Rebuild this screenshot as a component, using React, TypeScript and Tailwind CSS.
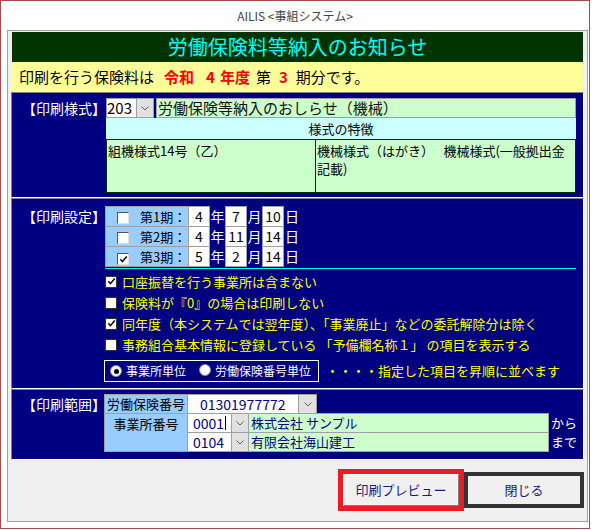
import React from 'react';

const periods = [
  { n: 1, checked: false, y: '4', m: '7', d: '10' },
  { n: 2, checked: false, y: '4', m: '11', d: '14' },
  { n: 3, checked: true, y: '5', m: '2', d: '14' },
];

const options = [
  { checked: true, text: '口座振替を行う事業所は含まない' },
  { checked: false, text: '保険料が『0』の場合は印刷しない' },
  { checked: true, text: '同年度（本システムでは翌年度）、「事業廃止」などの委託解除分は除く' },
  { checked: false, text: '事務組合基本情報に登録している 「予備欄名称１」 の項目を表示する' },
];

const Tick: React.FC = () => (
  <svg viewBox="0 0 10 10" className="w-[9px] h-[9px]">
    <path d="M1.5 4.8 L3.8 7.4 L8.6 1.8" stroke="#000" strokeWidth="1.7" fill="none" />
  </svg>
);

// checkbox used next to the yellow option texts
const Check: React.FC<{ checked?: boolean }> = ({ checked }) => (
  <span className="shrink-0 inline-flex items-center justify-center w-[12px] h-[12px] bg-white border border-[#333]">
    {checked && <Tick />}
  </span>
);

// sunken checkbox in the period table
const SunkenCheck: React.FC<{ checked?: boolean }> = ({ checked }) => (
  <span className="shrink-0 inline-flex items-center justify-center w-[12px] h-[12px] bg-white border-t border-l border-[#555] border-r-[#e0e0e0] border-b-[#e0e0e0] border-r border-b">
    {checked && <Tick />}
  </span>
);

const DropBtn: React.FC<{ className?: string }> = ({ className = '' }) => (
  <div className={`shrink-0 flex items-center justify-center bg-[#e1e1e1] border border-[#a0a0a0] ${className}`}>
    <svg viewBox="0 0 8 5" className="w-[8px] h-[5px]">
      <path d="M0.5 0.5 L4 4 L7.5 0.5" stroke="#606060" strokeWidth="1" fill="none" />
    </svg>
  </div>
);

const Radio: React.FC<{ checked?: boolean }> = ({ checked }) => (
  <span className="shrink-0 inline-flex items-center justify-center w-[12px] h-[12px] rounded-full bg-white border border-[#888]">
    {checked && <span className="w-[5px] h-[5px] rounded-full bg-black" />}
  </span>
);

const Section: React.FC<{ label: string; className?: string; children: React.ReactNode }> = ({ label, className = '', children }) => (
  <div className={`flex bg-[#000080] border border-[#808080] border-r-white border-b-white ${className}`}>
    <div className="w-[93px] shrink-0 pl-[10px] text-white text-[14px] leading-[20px] whitespace-nowrap">{label}</div>
    <div className="flex-1 min-w-0 pr-[7px]">{children}</div>
  </div>
);

export default function App() {
  return (
    <div className="w-[596px] h-[530px] bg-white font-['Noto_Sans_CJK_JP','Noto_Sans',sans-serif]">
      <div className="w-[590px] h-[529px] border border-[#a94a4a] flex flex-col">
        <div className="h-[29px] flex items-center justify-center text-[12px] text-[#444]">AILIS &lt;事組システム&gt;</div>

        <div className="ml-[6px] w-[581px] h-[492px] border border-[#a0a0a0] bg-[#f0f0f0] px-[3px] pt-px flex flex-col">
          <div className="mx-px h-[30px] bg-[#003300] text-[#00ffff] text-[20px] leading-[30px] text-center">
            労働保険料等納入のお知らせ
          </div>
          <div className="mx-px h-[30px] bg-[#ffff99] flex items-center pl-[7px] text-[15px] text-black whitespace-nowrap">
            <span>印刷を行う保険料は</span>
            <span className="ml-[10px] text-[#ff0000] font-bold">令和</span>
            <span className="ml-[12px] text-[#ff0000] font-bold">4</span>
            <span className="ml-[5px] text-[#ff0000] font-bold">年度</span>
            <span className="ml-[6px]">第</span>
            <span className="ml-[8px] text-[#ff0000] font-bold">3</span>
            <span className="ml-[8px]">期分です。</span>
          </div>

          {/* 印刷様式 */}
          <Section label="【印刷様式】" className="h-[106px] pt-[5px]">
            <div className="ml-px flex flex-col">
              <div className="flex h-[20px] gap-[2px]">
                <div className="flex w-[48px] h-[20px] border border-[#a0a0a0] bg-white">
                  <span className="flex-1 text-[15px] leading-[18px] text-black">203</span>
                  <DropBtn className="w-[17px] h-[18px] border-0 border-l" />
                </div>
                <div className="flex-1 h-[20px] bg-[#ccffcc] border border-[#a0a0a0] text-[15px] leading-[18px] pl-px text-[#111] whitespace-nowrap overflow-hidden">
                  労働保険等納入のおしらせ（機械）
                </div>
              </div>
              <div className="h-[21px] bg-[#ccffff] text-[13px] leading-[21px] text-center text-black">様式の特徴</div>
              <div className="flex h-[54px] bg-[#ccffcc] border border-[#003300] text-[13px] leading-[18px] text-black">
                <div className="w-[209px] shrink-0 border-r border-[#003300] pl-px pt-[2px]">組機様式14号（乙）</div>
                <div className="flex-1 pl-px pt-[2px] whitespace-nowrap">
                  <div>機械様式（はがき）　 機械様式(一般拠出金</div>
                  <div>記載)</div>
                </div>
              </div>
            </div>
          </Section>

          {/* 印刷設定 */}
          <Section label="【印刷設定】" className="h-[191px] pt-[7px]">
            <div className="flex flex-col">
              {periods.map((p, i) => (
                <div key={p.n} className={`flex h-[21px] ${i > 0 ? '-mt-px' : ''}`}>
                  <div className="w-[84px] h-full bg-[#99ccff] border border-[#a0a0a0] flex items-center">
                    <span className="ml-[11px]"><SunkenCheck checked={p.checked} /></span>
                    <span className="ml-[11px] text-[13px] text-black">第{p.n}期：</span>
                  </div>
                  <div className="-ml-px w-[22px] h-full bg-white border border-[#a0a0a0] text-center text-[14px] leading-[19px] text-black">{p.y}</div>
                  <div className="w-[15px] text-white text-[14px] leading-[21px] text-center">年</div>
                  <div className="w-[22px] h-full bg-white border border-[#a0a0a0] text-center text-[14px] leading-[19px] text-black">{p.m}</div>
                  <div className="w-[15px] text-white text-[14px] leading-[21px] text-center">月</div>
                  <div className="w-[22px] h-full bg-white border border-[#a0a0a0] text-center text-[14px] leading-[19px] text-black">{p.d}</div>
                  <div className="w-[16px] text-white text-[14px] leading-[21px] text-center">日</div>
                </div>
              ))}
              <div className="mt-px h-px bg-[#00ffff]" />
              <div className="mt-[2px] flex flex-col">
                {options.map((o) => (
                  <div key={o.text} className="h-[21px] flex items-center gap-[5px] text-[13px] text-[#ffff00] whitespace-nowrap">
                    <Check checked={o.checked} />
                    <span>{o.text}</span>
                  </div>
                ))}
              </div>
              <div className="mt-[5px] flex items-center">
                <div className="-ml-px w-[215px] h-[22px] border border-white flex items-center pl-[5px] text-[12px] text-white whitespace-nowrap">
                  <Radio checked />
                  <span className="ml-[4px]">事業所単位</span>
                  <span className="ml-[13px]"><Radio /></span>
                  <span className="ml-[4px]">労働保険番号単位</span>
                </div>
                <span className="ml-[7px] text-[13px] text-[#ffff00] whitespace-nowrap">・・・・指定した項目を昇順に並べます</span>
              </div>
            </div>
          </Section>

          {/* 印刷範囲 */}
          <Section label="【印刷範囲】" className="h-[71px] pt-[4px]">
            <div className="-ml-px flex flex-col text-[13px]">
              <div className="flex h-[20px]">
                <div className="w-[84px] h-full bg-[#99ccff] border border-[#a0a0a0] pl-[2px] leading-[18px] text-black whitespace-nowrap">労働保険番号</div>
                <div className="-ml-px w-[112px] h-full bg-white border border-[#a0a0a0] pl-[12px] text-[14px] leading-[18px] text-[#000080]">01301977772</div>
                <DropBtn className="-ml-px w-[19px] h-[20px]" />
              </div>
              <div className="flex -mt-px">
                <div className="shrink-0 w-[84px] h-[39px] bg-[#99ccff] border border-[#a0a0a0] text-center leading-[19px] text-black">事業所番号</div>
                <div className="flex flex-col shrink-0">
                  {[
                    { code: '0001', name: '株式会社 サンプル', tail: 'から', cursor: true },
                    { code: '0104', name: '有限会社海山建工', tail: 'まで', cursor: false },
                  ].map((r, i) => (
                    <div key={r.code} className={`flex h-[20px] ${i > 0 ? '-mt-px' : ''}`}>
                      <div className="shrink-0 -ml-px w-[45px] h-full bg-white border border-[#a0a0a0] pl-[5px] text-[14px] leading-[18px] text-[#000080] flex items-center">
                        <span>{r.code}</span>
                        {r.cursor && <span className="ml-px w-px h-[14px] bg-black" />}
                      </div>
                      <DropBtn className="-ml-px w-[18px] h-full" />
                      <div className="shrink-0 -ml-px w-[301px] h-full bg-[#ccffcc] border border-[#a0a0a0] pl-[2px] text-[13px] leading-[18px] text-[#000080] whitespace-nowrap">{r.name}</div>
                      <span className="shrink-0 ml-[2px] text-white text-[13px] leading-[20px] whitespace-nowrap">{r.tail}</span>
                    </div>
                  ))}
                </div>
              </div>
            </div>
          </Section>

          <div className="mt-[9px] flex justify-end items-center">
            <div className="w-[126px] h-[42px] border-[5px] border-[#ed1c24]">
              <div className="w-full h-full bg-[#f0f0f0] border border-white border-r-[#808080] border-b-[#808080] flex items-center justify-center text-[13px] text-[#1a1a80]">
                印刷プレビュー
              </div>
            </div>
            <div className="w-[120px] h-[36px] border-[4px] border-[#333] bg-[#f0f0f0] flex items-center justify-center text-[13px] text-[#1a1a80]">
              閉じる
            </div>
          </div>
        </div>
      </div>
    </div>
  );
}
